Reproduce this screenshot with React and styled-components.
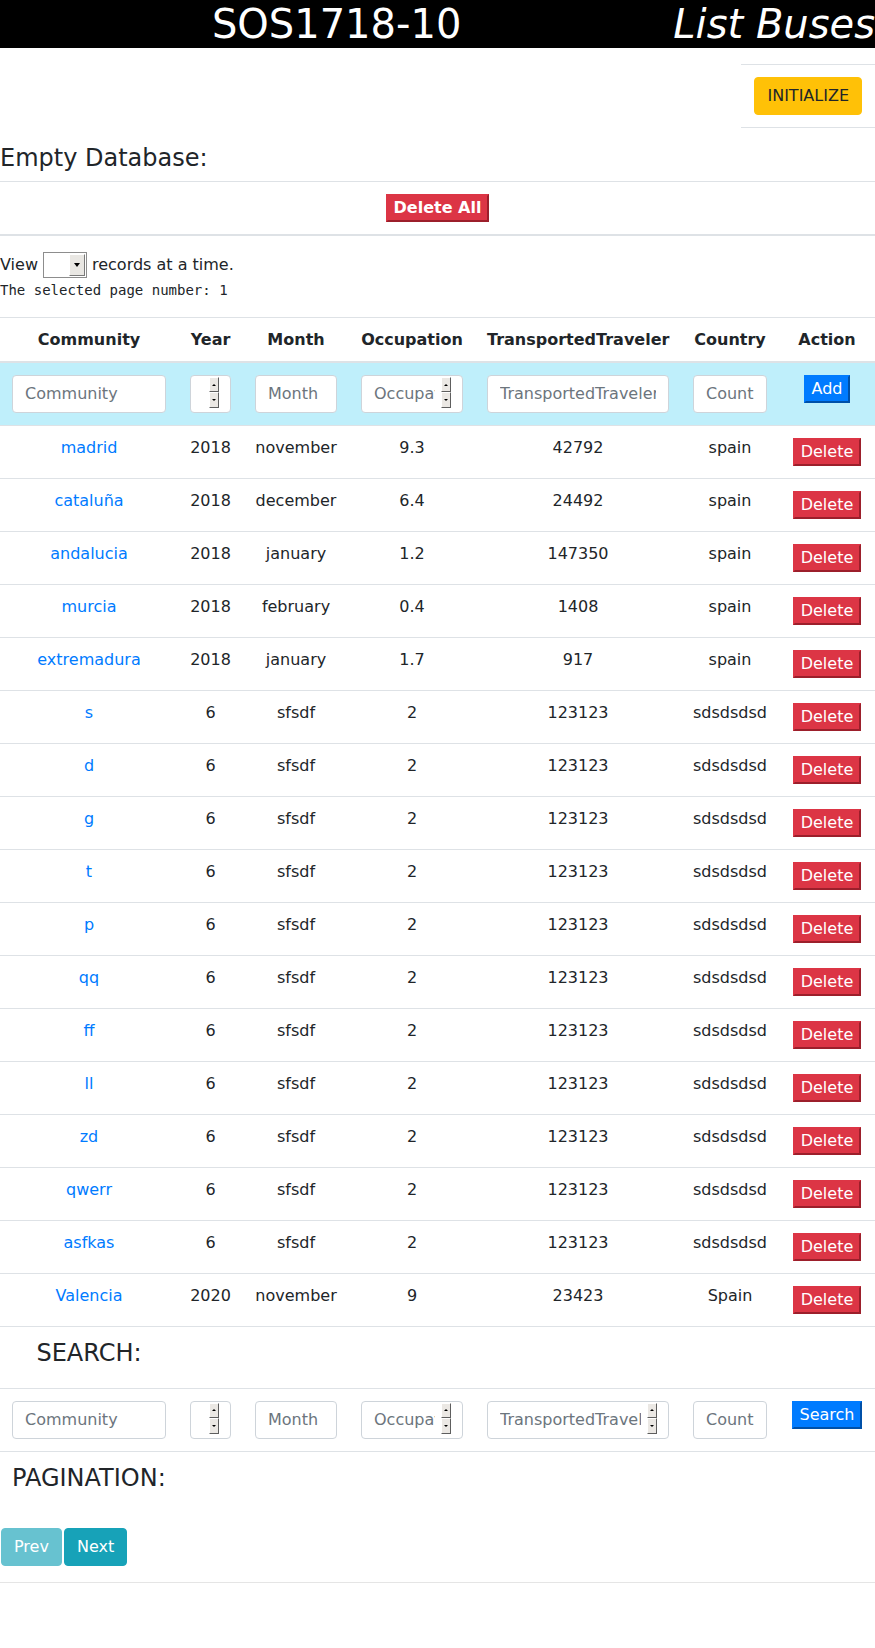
import React from 'react';
import styled, { createGlobalStyle } from 'styled-components';

const GlobalStyle = createGlobalStyle`
  * { box-sizing: border-box; }
  body {
    margin: 0;
    font-family: "DejaVu Sans", sans-serif;
    font-size: 16px;
    color: #212529;
    background: #fff;
  }
`;

const HeaderBar = styled.header`
  display: flex;
  background: #000;
  color: #fff;
  font-size: 40px;
  line-height: 48px;
  height: 48px;
  white-space: nowrap;
`;

const Title = styled.h1`
  flex: 1;
  margin: 0;
  font-size: inherit;
  font-weight: 400;
  text-align: center;
`;

const Subtitle = styled.span`
  font-style: italic;
`;

const Toolbar = styled.div`
  display: flex;
  justify-content: flex-end;
  margin-top: 16px;
`;

const ToolbarCell = styled.div`
  padding: 12px;
  border-top: 1px solid #dee2e6;
  border-bottom: 1px solid #dee2e6;
`;

const Btn = styled.button`
  display: inline-block;
  font-family: inherit;
  font-size: 16px;
  line-height: 1.5;
  padding: 6px 12px;
  border-radius: 4px;
  border: 1px solid ${p => p.$bg};
  background: ${p => p.$bg};
  color: ${p => p.$color || '#fff'};
  opacity: ${p => (p.disabled ? 0.65 : 1)};
  margin: 0 1px;
  cursor: pointer;
`;

const FlatBtn = styled.button`
  display: inline-block;
  font-family: inherit;
  font-size: 16px;
  font-weight: ${p => (p.$bold ? 700 : 400)};
  height: 28px;
  line-height: 24px;
  padding: 0 6px;
  border-radius: 0;
  border: 2px solid;
  border-color: ${p => p.$bg} ${p => p.$dark} ${p => p.$dark} ${p => p.$bg};
  background: ${p => p.$bg};
  color: #fff;
  white-space: nowrap;
  cursor: pointer;
`;

const SectionTitle = styled.h4`
  margin: ${p => (p.$top ? '16px' : '0')} 0 8px;
  font-size: 24px;
  font-weight: 500;
  line-height: 1.2;
  white-space: nowrap;
`;

const DeleteAllBar = styled.div`
  border-top: 1px solid #dee2e6;
  border-bottom: 2px solid #dee2e6;
  padding: 12px;
  text-align: center;
  font-size: 0;
`;

const ViewLine = styled.div`
  display: flex;
  align-items: center;
  gap: 5px;
  height: 26px;
  margin-top: 16px;
`;

const SelectBox = styled.span`
  display: inline-flex;
  justify-content: flex-end;
  width: 44px;
  height: 26px;
  border: 1px solid #8d8d8d;
  background: #fff;
  padding: 1px;
`;

const SelectArrow = styled.span`
  display: flex;
  align-items: center;
  justify-content: center;
  width: 16px;
  background: #e9e7e3;
  border: 1px solid;
  border-color: #fff #7a7a7a #7a7a7a #fff;

  &::after {
    content: '';
    border-left: 3px solid transparent;
    border-right: 3px solid transparent;
    border-top: 4px solid #000;
  }
`;

const Mono = styled.pre`
  margin: 4px 0 19px;
  font-family: "DejaVu Sans Mono", monospace;
  font-size: 14px;
  line-height: 16px;
  color: #212529;
`;

const Table = styled.table`
  width: 100%;
  table-layout: fixed;
  border-collapse: collapse;
`;

const Th = styled.th`
  padding: 12px;
  font-weight: 700;
  text-align: center;
  vertical-align: bottom;
  border-top: 1px solid #dee2e6;
  border-bottom: 2px solid #dee2e6;
  white-space: nowrap;
`;

const Tr = styled.tr`
  background: ${p => p.$bg || 'transparent'};
`;

const Td = styled.td`
  padding: 12px;
  text-align: ${p => p.$align || 'center'};
  vertical-align: top;
  border-top: 1px solid #dee2e6;
  white-space: nowrap;
`;

const Link = styled.a`
  color: #007bff;
  text-decoration: none;
`;

const Field = styled.div`
  position: relative;
`;

const Input = styled.input`
  display: block;
  width: 100%;
  height: 38px;
  padding: 6px ${p => (p.$spin ? '27px' : '12px')} 6px 12px;
  font-family: inherit;
  font-size: 16px;
  line-height: 1.5;
  color: #495057;
  background: #fff;
  border: 1px solid #ced4da;
  border-radius: 4px;
  -moz-appearance: textfield;

  &::placeholder { color: #6c757d; opacity: 1; }
  &::-webkit-inner-spin-button,
  &::-webkit-outer-spin-button { -webkit-appearance: none; margin: 0; }
`;

const Spinner = styled.span`
  position: absolute;
  right: 12px;
  top: 2px;
  width: 10px;
  height: 31px;
  display: flex;
  flex-direction: column;
  pointer-events: none;
`;

const SpinHalf = styled.span`
  flex: 1;
  display: flex;
  align-items: center;
  justify-content: center;
  background: #ebe8e4;
  border: 1px solid;
  border-color: #fff #5e5e5e #5e5e5e #fff;

  &::after {
    content: '';
    border-left: 2px solid transparent;
    border-right: 2px solid transparent;
    ${p => (p.$up ? 'border-bottom: 2px solid #000;' : 'border-top: 2px solid #000;')}
  }
`;

const Pager = styled.div`
  display: flex;
  margin-top: 16px;
`;

const Rule = styled.hr`
  margin: 16px 0;
  border: 0;
  border-top: 1px solid rgba(0, 0, 0, 0.1);
`;

const columns = [
  { key: 'community', label: 'Community', width: 178 },
  { key: 'year', label: '', width: 65, spin: true },
  { key: 'month', label: 'Month', width: 106 },
  { key: 'occupation', label: 'Occupation', width: 126, spin: true },
  { key: 'traveler', label: 'TransportedTraveler', width: 206 },
  { key: 'country', label: 'Country', width: 98 },
];

const headings = ['Community', 'Year', 'Month', 'Occupation', 'TransportedTraveler', 'Country', 'Action'];

const rows = [
  ['madrid', '2018', 'november', '9.3', '42792', 'spain'],
  ['cataluña', '2018', 'december', '6.4', '24492', 'spain'],
  ['andalucia', '2018', 'january', '1.2', '147350', 'spain'],
  ['murcia', '2018', 'february', '0.4', '1408', 'spain'],
  ['extremadura', '2018', 'january', '1.7', '917', 'spain'],
  ...['s', 'd', 'g', 't', 'p', 'qq', 'ff', 'll', 'zd', 'qwerr', 'asfkas'].map(c => [
    c, '6', 'sfsdf', '2', '123123', 'sdsdsdsd',
  ]),
  ['Valencia', '2020', 'november', '9', '23423', 'Spain'],
];

const FormField = ({ placeholder, spin }) => (
  <Field>
    <Input type={spin ? 'number' : 'text'} placeholder={placeholder} $spin={spin} />
    {spin && (
      <Spinner>
        <SpinHalf $up />
        <SpinHalf />
      </Spinner>
    )}
  </Field>
);

const InputRow = ({ bg, spinTraveler, action }) => (
  <Tr $bg={bg}>
    {columns.map(col => (
      <Td key={col.key}>
        <FormField
          placeholder={col.label}
          spin={col.spin || (col.key === 'traveler' && spinTraveler)}
        />
      </Td>
    ))}
    <Td>{action}</Td>
  </Tr>
);

const App = () => (
  <>
    <GlobalStyle />
    <HeaderBar>
      <Title>SOS1718-10</Title>
      <Subtitle>List Buses</Subtitle>
    </HeaderBar>

    <Toolbar>
      <ToolbarCell>
        <Btn $bg="#ffc107" $color="#212529">INITIALIZE</Btn>
      </ToolbarCell>
    </Toolbar>

    <SectionTitle $top>Empty Database:</SectionTitle>
    <DeleteAllBar>
      <FlatBtn $bg="#dc3545" $dark="#9c1f2b" $bold>Delete All</FlatBtn>
    </DeleteAllBar>

    <ViewLine>
      <span>View</span>
      <SelectBox><SelectArrow /></SelectBox>
      <span>records at a time.</span>
    </ViewLine>
    <Mono>The selected page number: 1</Mono>

    <Table>
      <colgroup>
        {columns.map(col => <col key={col.key} style={{ width: col.width }} />)}
        <col style={{ width: 96 }} />
      </colgroup>
      <thead>
        <tr>
          {headings.map(h => <Th key={h}>{h}</Th>)}
        </tr>
      </thead>
      <tbody>
        <InputRow
          bg="#bfeffb"
          action={<FlatBtn $bg="#007bff" $dark="#0050a8">Add</FlatBtn>}
        />
        {rows.map((r, i) => (
          <tr key={i}>
            <Td><Link href="#">{r[0]}</Link></Td>
            {r.slice(1).map((v, j) => <Td key={j}>{v}</Td>)}
            <Td><FlatBtn $bg="#dc3545" $dark="#9c1f2b">Delete</FlatBtn></Td>
          </tr>
        ))}
        <tr>
          <Td><SectionTitle>SEARCH:</SectionTitle></Td>
          <Td /><Td /><Td /><Td /><Td /><Td />
        </tr>
        <InputRow
          spinTraveler
          action={<FlatBtn $bg="#007bff" $dark="#0050a8">Search</FlatBtn>}
        />
        <tr>
          <Td colSpan={7} $align="left"><SectionTitle>PAGINATION:</SectionTitle></Td>
        </tr>
      </tbody>
    </Table>

    <Pager>
      <Btn $bg="#17a2b8" disabled>Prev</Btn>
      <Btn $bg="#17a2b8">Next</Btn>
    </Pager>
    <Rule />
  </>
);

export default App;
